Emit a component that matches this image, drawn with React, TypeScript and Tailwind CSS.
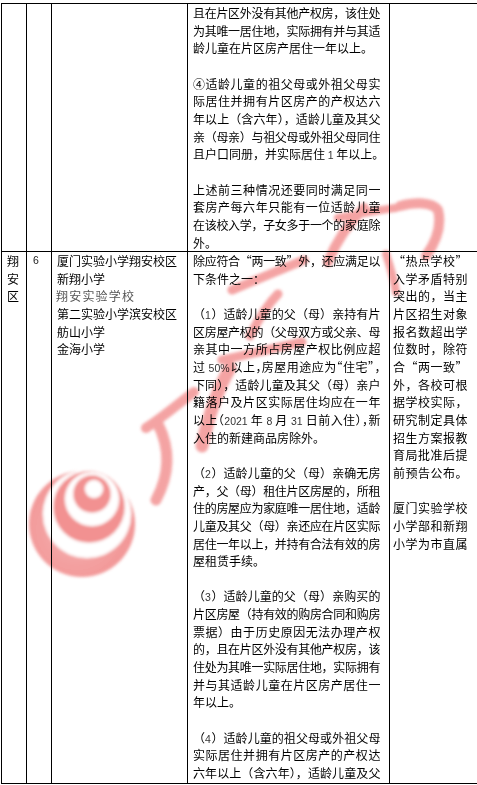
import React from "react";

type Ln = { t: string; f?: boolean; h?: boolean };

const r1c4: Ln[] = [
  { t: "且在片区外没有其他产权房，该住处", f: true },
  { t: "为其唯一居住地，实际拥有并与其适", f: true },
  { t: "龄儿童在片区房产居住一年以上。" },
  { t: "" },
  { t: "④适龄儿童的祖父母或外祖父母实", f: true },
  { t: "际居住并拥有片区房产的产权达六", f: true },
  { t: "年以上（含六年），适龄儿童及其父", f: true },
  { t: "亲（母亲）与祖父母或外祖父母同住", f: true },
  { t: "且户口同册，并实际居住 1 年以上。" },
  { t: "" },
  { t: "上述前三种情况还要同时满足同一", f: true },
  { t: "套房产每六年只能有一位适龄儿童", f: true },
  { t: "在该校入学，子女多于一个的家庭除", f: true },
  { t: "外。" },
];

const r2c4: Ln[] = [
  { t: "除应符合“两一致”外，还应满足以", f: true },
  { t: "下条件之一：" },
  { t: "" },
  { t: "（1）适龄儿童的父（母）亲持有片", f: true },
  { t: "区房屋产权的（父母双方或父亲、母", f: true },
  { t: "亲其中一方所占房屋产权比例应超", f: true },
  { t: "过 50%以上，房屋用途应为“住宅”，", f: true, h: true },
  { t: "下同），适龄儿童及其父（母）亲户", f: true },
  { t: "籍落户及片区实际居住均应在一年", f: true },
  { t: "以上（2021 年 8 月 31 日前入住），新", f: true, h: true },
  { t: "入住的新建商品房除外。" },
  { t: "" },
  { t: "（2）适龄儿童的父（母）亲确无房", f: true },
  { t: "产，父（母）租住片区房屋的，所租", f: true },
  { t: "住的房屋应为家庭唯一居住地，适龄", f: true },
  { t: "儿童及其父（母）亲还应在片区实际", f: true },
  { t: "居住一年以上，并持有合法有效的房", f: true },
  { t: "屋租赁手续。" },
  { t: "" },
  { t: "（3）适龄儿童的父（母）亲购买的", f: true },
  { t: "片区房屋（持有效的购房合同和购房", f: true },
  { t: "票据）由于历史原因无法办理产权", f: true },
  { t: "的，且在片区外没有其他产权房，该", f: true },
  { t: "住处为其唯一实际居住地，实际拥有", f: true },
  { t: "并与其适龄儿童在片区房产居住一", f: true },
  { t: "年以上。" },
  { t: "" },
  { t: "（4）适龄儿童的祖父母或外祖父母", f: true },
  { t: "实际居住并拥有片区房产的产权达", f: true },
  { t: "六年以上（含六年），适龄儿童及父", f: true },
];

const r2c5: string[] = [
  "“热点学校”",
  "入学矛盾特别",
  "突出的，当主",
  "片区招生对象",
  "报名数超出学",
  "位数时，除符",
  "合“两一致”",
  "外，各校可根",
  "据学校实际，",
  "研究制定具体",
  "招生方案报教",
  "育局批准后提",
  "前预告公布。",
  "",
  "厦门实验学校",
  "小学部和新翔",
  "小学为市直属",
];

function Line({ t, f, h }: Ln) {
  if (!t) return <div className="h-[17.66px]" />;
  const parts = t.split(/(\d+%?)/);
  let cls = "h-[17.66px] whitespace-nowrap";
  if (f) cls += " [text-align:justify] [text-align-last:justify] tracking-[-0.4px]";
  if (h) cls += " [font-feature-settings:'halt']";
  return (
    <div className={cls}>
      {parts.map((p, i) =>
        /\d/.test(p) ? (
          <span key={i} className="font-['Liberation_Sans',sans-serif] text-[10.5px] tracking-normal text-[#333]">
            {p}
          </span>
        ) : (
          <React.Fragment key={i}>{p}</React.Fragment>
        )
      )}
    </div>
  );
}

function Watermark() {
  const red = "#e94848";
  return (
    <svg
      className="absolute left-0 top-0 pointer-events-none mix-blend-multiply"
      width={477}
      height={785}
      viewBox="0 0 477 785"
    >
      <defs>
        <filter id="soft" x="-10%" y="-10%" width="120%" height="120%">
          <feGaussianBlur stdDeviation="1.6" />
        </filter>
        <radialGradient id="sph" cx="0.45" cy="0.55" r="0.6">
          <stop offset="0" stopColor="#f08080" />
          <stop offset="1" stopColor="#e84a4a" />
        </radialGradient>
      </defs>
      <g opacity={0.6} filter="url(#soft)">
        {/* sphere */}
        <circle cx={82} cy={524} r={53} fill="url(#sph)" />
        <circle cx={87} cy={514} r={44} fill="#fff" />
        <circle cx={89} cy={507} r={36} fill={red} />
        <circle cx={92} cy={499} r={27} fill="#fff" />
        <circle cx={92} cy={494} r={19} fill={red} />
        <circle cx={94} cy={489} r={9} fill="#fff" />
      </g>
      <g opacity={0.5} filter="url(#soft)" fill="none" stroke={red} strokeLinecap="round" strokeLinejoin="round">
        {/* 厦-like brush strokes */}
        <path d="M146 428 C162 418 178 404 194 392" strokeWidth={10} />
        <path d="M158 424 C170 448 170 474 156 500" strokeWidth={11} />
        <path d="M202 446 C208 418 216 392 230 368" strokeWidth={13} />
        <path d="M222 360 C250 354 276 348 302 342" strokeWidth={9} />
        <path d="M250 336 C258 320 266 306 278 294" strokeWidth={9} />
        <path d="M232 290 C256 280 280 270 304 260" strokeWidth={9} />
        <path d="M328 262 C336 242 348 224 364 208" strokeWidth={10} />
        <path d="M338 218 C358 214 378 210 396 208" strokeWidth={8} />
        <path d="M400 206 C416 202 432 202 438 210 C442 226 436 242 426 256" strokeWidth={10} />
        <path d="M386 254 C390 266 394 280 396 292" strokeWidth={8} />
      </g>
    </svg>
  );
}

export default function App() {
  return (
    <div className="relative w-[477px] h-[785px] overflow-hidden bg-white text-black font-['Noto_Sans_CJK_SC','Noto_Sans',sans-serif] text-[12px] leading-[17.66px]">
      <div className="pt-[3px] pl-px">
        <div className="w-[476px] border-t border-black">
          {/* Row 1 */}
          <div className="flex h-[248px] border-b border-black">
            <div className="w-[25px] shrink-0 border-l border-black" />
            <div className="w-[25px] shrink-0 border-l border-black" />
            <div className="w-[136px] shrink-0 border-l border-black" />
            <div className="w-[202px] shrink-0 border-l border-black pl-[5px]">
              <div className="w-[187px]">
                {r1c4.map((l, i) => (
                  <Line key={i} {...l} />
                ))}
              </div>
            </div>
            <div className="w-[88px] shrink-0 border-l border-black" />
          </div>
          {/* Row 2 */}
          <div className="flex h-[532px] overflow-hidden border-b border-black">
            <div className="w-[25px] shrink-0 border-l border-black pl-[5px]">
              <div>翔</div>
              <div>安</div>
              <div>区</div>
            </div>
            <div className="w-[25px] shrink-0 border-l border-black pl-[6px]">
              <div className="font-['Liberation_Sans',sans-serif] text-[10.5px] text-[#222]">6</div>
            </div>
            <div className="w-[136px] shrink-0 border-l border-black pl-[5px]">
              <div>厦门实验小学翔安校区</div>
              <div>新翔小学</div>
              <div className="text-[#555] tracking-[1.2px] -ml-px">翔安实验学校</div>
              <div>第二实验小学滨安校区</div>
              <div>舫山小学</div>
              <div>金海小学</div>
            </div>
            <div className="w-[202px] shrink-0 border-l border-black pl-[5px]">
              <div className="w-[187px]">
                {r2c4.map((l, i) => (
                  <Line key={i} {...l} />
                ))}
              </div>
            </div>
            <div className="w-[88px] shrink-0 border-l border-black pl-[3px]">
              <div className="w-[74px]">
                {r2c5.map((t, i) => (
                  <Line key={i} t={t} f />
                ))}
              </div>
            </div>
          </div>
        </div>
      </div>
      <Watermark />
    </div>
  );
}
